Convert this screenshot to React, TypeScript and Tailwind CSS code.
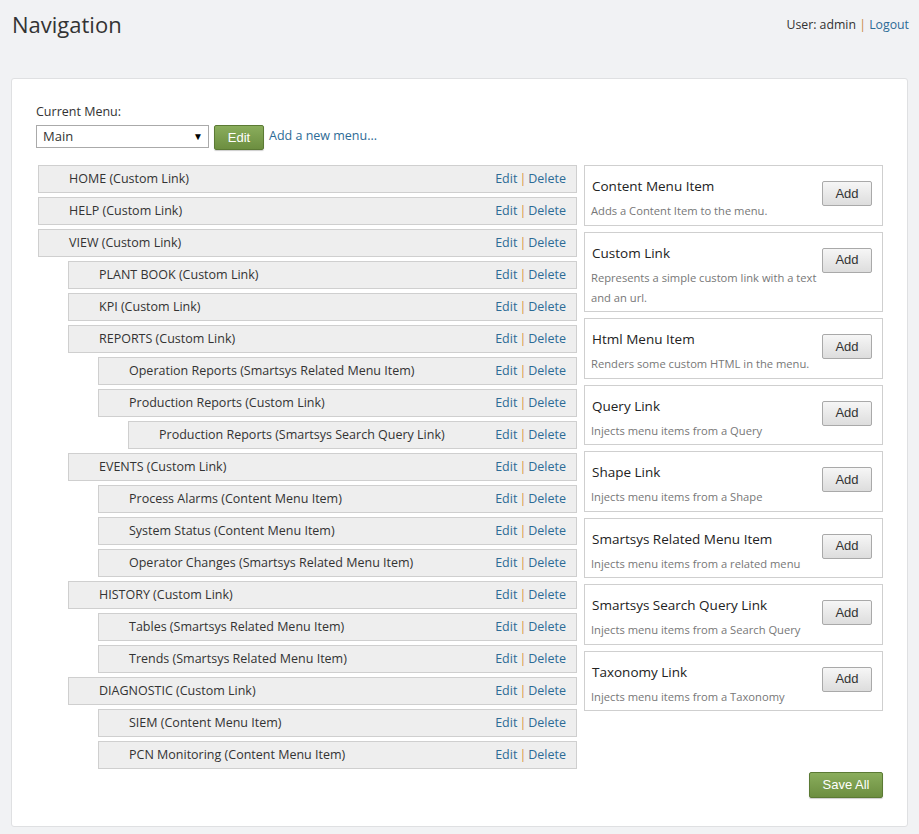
import React from 'react';

type Item = { name: string; kind: string; level: number };

const items: Item[] = [
  { name: 'HOME', kind: 'Custom Link', level: 0 },
  { name: 'HELP', kind: 'Custom Link', level: 0 },
  { name: 'VIEW', kind: 'Custom Link', level: 0 },
  { name: 'PLANT BOOK', kind: 'Custom Link', level: 1 },
  { name: 'KPI', kind: 'Custom Link', level: 1 },
  { name: 'REPORTS', kind: 'Custom Link', level: 1 },
  { name: 'Operation Reports', kind: 'Smartsys Related Menu Item', level: 2 },
  { name: 'Production Reports', kind: 'Custom Link', level: 2 },
  { name: 'Production Reports', kind: 'Smartsys Search Query Link', level: 3 },
  { name: 'EVENTS', kind: 'Custom Link', level: 1 },
  { name: 'Process Alarms', kind: 'Content Menu Item', level: 2 },
  { name: 'System Status', kind: 'Content Menu Item', level: 2 },
  { name: 'Operator Changes', kind: 'Smartsys Related Menu Item', level: 2 },
  { name: 'HISTORY', kind: 'Custom Link', level: 1 },
  { name: 'Tables', kind: 'Smartsys Related Menu Item', level: 2 },
  { name: 'Trends', kind: 'Smartsys Related Menu Item', level: 2 },
  { name: 'DIAGNOSTIC', kind: 'Custom Link', level: 1 },
  { name: 'SIEM', kind: 'Content Menu Item', level: 2 },
  { name: 'PCN Monitoring', kind: 'Content Menu Item', level: 2 },
];

const types = [
  { title: 'Content Menu Item', desc: 'Adds a Content Item to the menu.' },
  { title: 'Custom Link', desc: 'Represents a simple custom link with a text and an url.' },
  { title: 'Html Menu Item', desc: 'Renders some custom HTML in the menu.' },
  { title: 'Query Link', desc: 'Injects menu items from a Query' },
  { title: 'Shape Link', desc: 'Injects menu items from a Shape' },
  { title: 'Smartsys Related Menu Item', desc: 'Injects menu items from a related menu' },
  { title: 'Smartsys Search Query Link', desc: 'Injects menu items from a Search Query' },
  { title: 'Taxonomy Link', desc: 'Injects menu items from a Taxonomy' },
];

const indent = ['ml-0', 'ml-[30px]', 'ml-[60px]', 'ml-[90px]'];

const greenBtn =
  'bg-gradient-to-b from-[#8aad5c] to-[#6c8e40] border border-[#5b7a34] rounded-[2px] text-white font-["Liberation_Sans",Arial,sans-serif] text-[13px] shadow-[0_1px_1px_rgba(0,0,0,0.2)]';

export default function App() {
  return (
    <div className="min-h-[834px] bg-[#f1f2f4] font-['Open_Sans',sans-serif] text-[#333] pb-[8px]">
      <div className="flex justify-between items-start px-[10px] pt-[9px] h-[78px]">
        <h1 className="text-[22px] text-[#333] leading-[30px] pl-[2px]">Navigation</h1>
        <div className="text-[12.3px] mt-[7px] text-[#333]">
          User: admin <span className="text-[#c8893e]">|</span>{' '}
          <a className="text-[#2d6b96]">Logout</a>
        </div>
      </div>

      <div className="mx-[11px] w-[897px] bg-white border border-[#dfe0e2] rounded-[3px] px-[24px] pt-[23px] pb-[28px]">
        <div className="text-[12.5px] leading-[20px]">Current Menu:</div>
        <div className="flex items-center gap-[5px] mt-[1px]">
          <div className="w-[173px] h-[23px] border border-[#aaa] flex items-center justify-between pl-[6px] pr-[5px] text-[13px] bg-white">
            <span>Main</span>
            <span className="text-[10px] text-black">▼</span>
          </div>
          <button className={`${greenBtn} w-[50px] h-[25px] mt-[2px]`}>Edit</button>
          <a className="text-[12.5px] text-[#2d6b96]">Add a new menu...</a>
        </div>

        <div className="flex gap-[7px] mt-[15px]">
          <div className="w-[540px] ml-[2px] flex flex-col gap-[4px]">
            {items.map((it, i) => (
              <div
                key={i}
                className={`${indent[it.level]} h-[28px] bg-[#eeeeee] border border-[#cfcfcf] flex items-center justify-between pl-[30px] pr-[10px] text-[12.5px]`}
              >
                <span>
                  {it.name} ({it.kind})
                </span>
                <span className="text-[#2d6b96] flex items-center">
                  <a>Edit</a>
                  <span className="text-[#d7923d] mx-[2px]">|</span>
                  <a>Delete</a>
                </span>
              </div>
            ))}
          </div>

          <div className="w-[299px] flex flex-col gap-[6px]">
            {types.map((t) => (
              <div key={t.title} className="border border-[#cfcfcf] flex justify-between pl-[6px] pr-[10px] pt-[10px] pb-[3.5px]">
                <div className="w-[231px]">
                  <div className="text-[13.5px] leading-[20px] text-[#222] pl-[1px]">{t.title}</div>
                  <div className="text-[11.2px] leading-[20px] text-[#777] mt-[5px]">{t.desc}</div>
                </div>
                <button className="w-[50px] h-[25px] mt-[5px] bg-gradient-to-b from-[#f6f6f6] to-[#dddddd] border border-[#a9a9a9] rounded-[2px] text-[13px] text-[#333] font-['Liberation_Sans',Arial,sans-serif]">
                  Add
                </button>
              </div>
            ))}
          </div>
        </div>

        <div className="flex justify-end mt-[3px]">
          <button className={`${greenBtn} w-[74px] h-[26px]`}>Save All</button>
        </div>
      </div>
    </div>
  );
}
